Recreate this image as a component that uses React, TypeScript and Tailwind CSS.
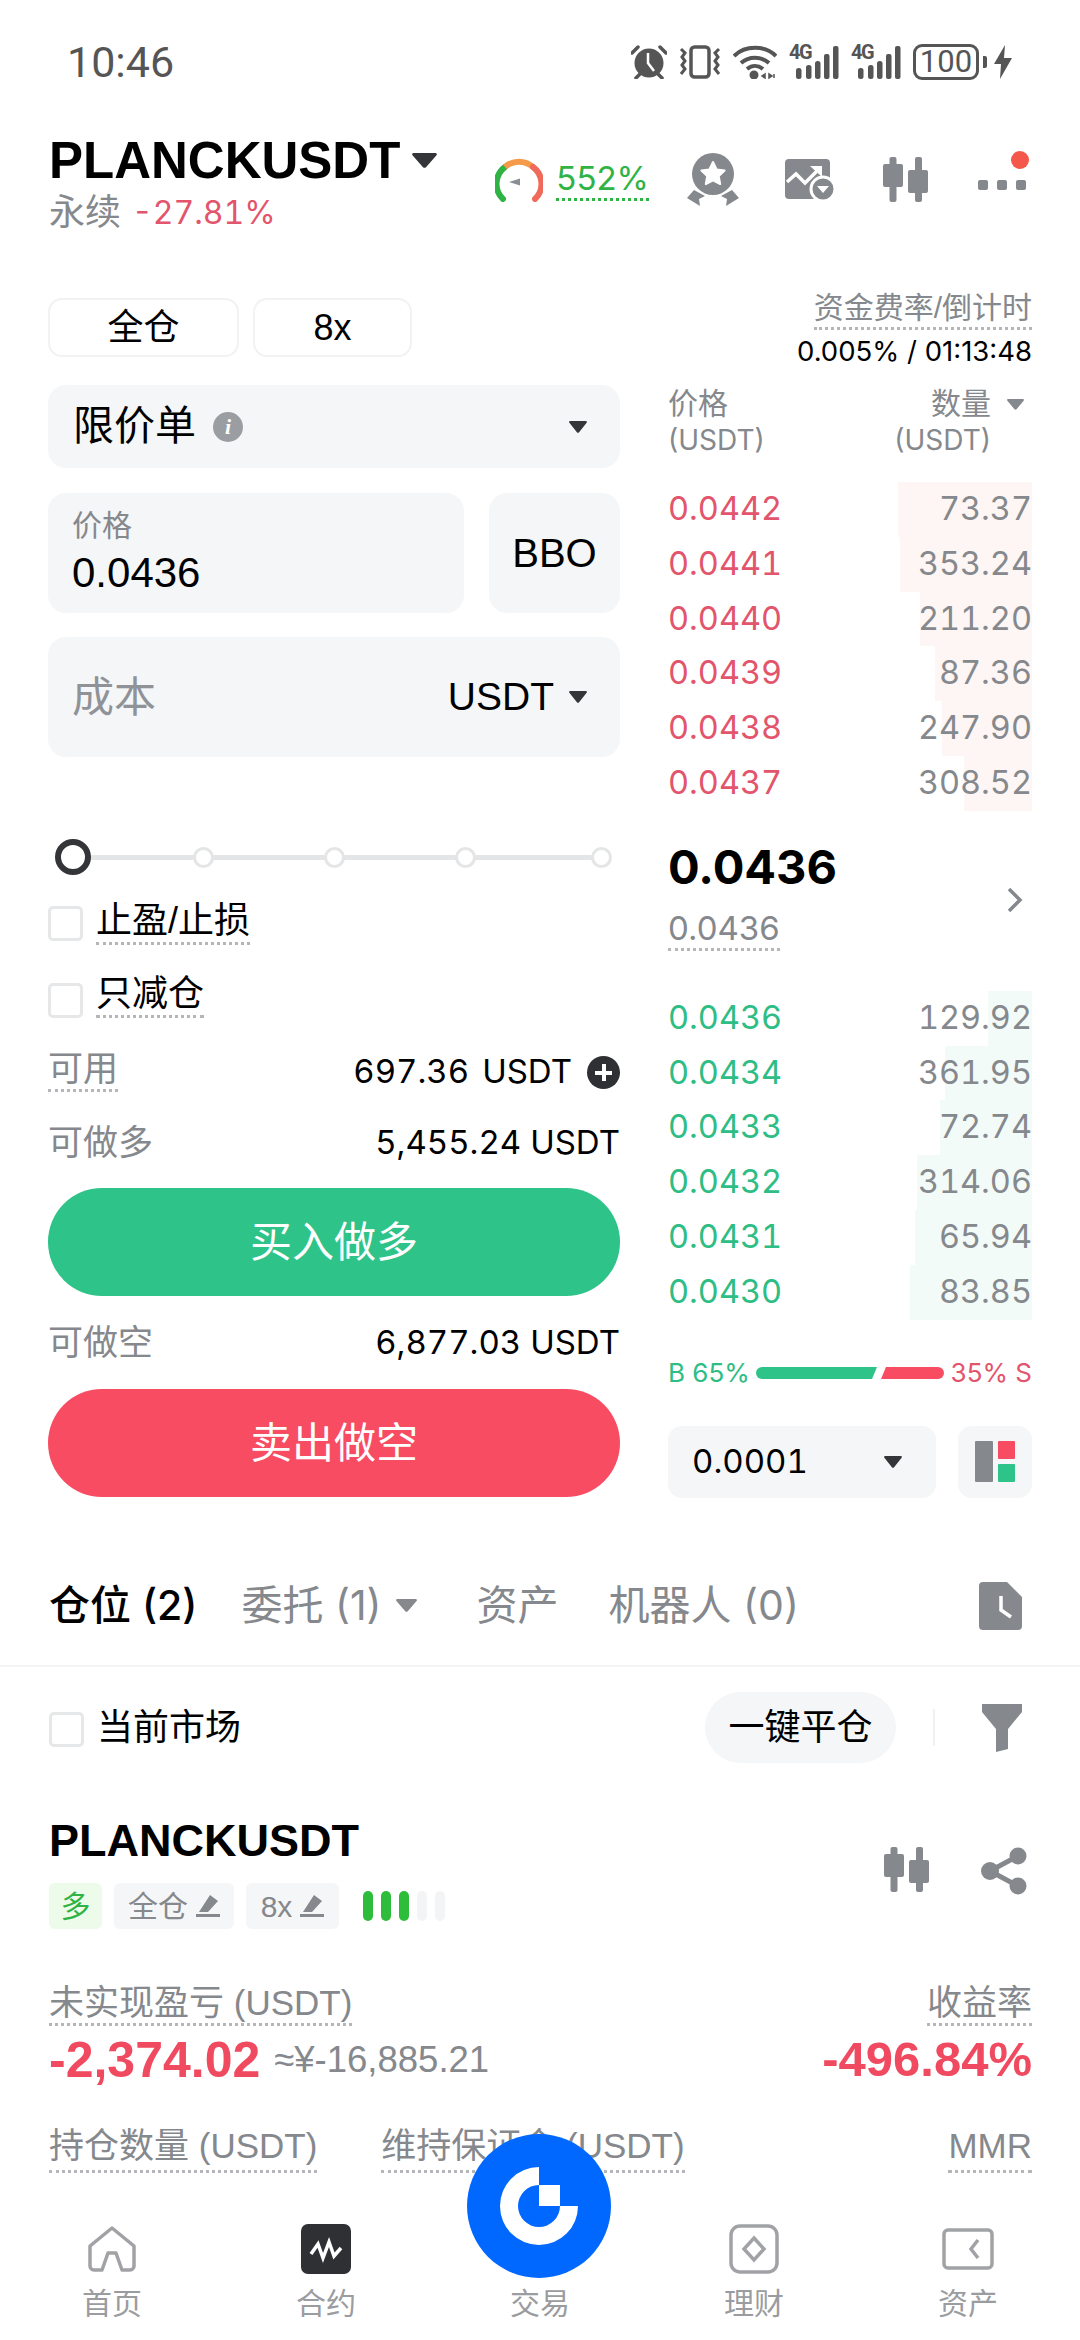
import type { ReactNode } from 'react';

const GRAY = '#85888c';

const asks = [
  { price: '0.0442', size: '73.37', bar: 134 },
  { price: '0.0441', size: '353.24', bar: 132 },
  { price: '0.0440', size: '211.20', bar: 112 },
  { price: '0.0439', size: '87.36', bar: 97 },
  { price: '0.0438', size: '247.90', bar: 90 },
  { price: '0.0437', size: '308.52', bar: 68 },
];

const bids = [
  { price: '0.0436', size: '129.92', bar: 44 },
  { price: '0.0434', size: '361.95', bar: 87 },
  { price: '0.0433', size: '72.74', bar: 92 },
  { price: '0.0432', size: '314.06', bar: 115 },
  { price: '0.0431', size: '65.94', bar: 117 },
  { price: '0.0430', size: '83.85', bar: 122 },
];

function Caret({ w, h, color = '#333538' }: { w: number; h: number; color?: string }) {
  return (
    <svg width={w} height={h} viewBox="0 0 20 14" preserveAspectRatio="none" className="shrink-0">
      <path d="M1.5 0h17c1.2 0 1.8 1.2 1.1 2.1L11.2 13.2c-.6.8-1.8.8-2.4 0L.4 2.1C-.3 1.2.3 0 1.5 0z" fill={color} />
    </svg>
  );
}

function Dotted({ children, className = '' }: { children: ReactNode; className?: string }) {
  return <span className={`inline-block border-b-[3px] border-dotted border-[#b4b6b9] ${className}`}>{children}</span>;
}

function Gauge() {
  return (
    <svg width="48" height="44" viewBox="0 0 48 44" className="shrink-0">
      <path d="M8 41A21 21 0 0 1 10 9" fill="none" stroke="#2fb344" strokeWidth="6" strokeLinecap="round" />
      <path d="M10 9A21 21 0 0 1 38 9" fill="none" stroke="#f59a4a" strokeWidth="6" />
      <path d="M38 9A21 21 0 0 1 40 41" fill="none" stroke="#ef6a5a" strokeWidth="6" strokeLinecap="round" />
      <path d="M14 24l11-3.5v7z" fill="#8a8d91" />
    </svg>
  );
}

function AwardIcon() {
  return (
    <svg width="52" height="54" viewBox="0 0 52 54" className="shrink-0">
      <circle cx="26" cy="21" r="21" fill="#85888c" />
      <path d="M26 9l3.6 7.4 8 1.1-5.8 5.6 1.4 8-7.2-3.8-7.2 3.8 1.4-8-5.8-5.6 8-1.1z" fill="#fff" stroke="#fff" strokeWidth="2" strokeLinejoin="round" />
      <path d="M7 37l11 6-6 3 1 7-13-8z" fill="#85888c" />
      <path d="M45 37l-11 6 6 3-1 7 13-8z" fill="#85888c" />
    </svg>
  );
}

function ChartIcon() {
  return (
    <svg width="50" height="44" viewBox="0 0 50 44" className="shrink-0">
      <rect x="0" y="1" width="45" height="40" rx="4" fill="#85888c" />
      <path d="M2 24l9-8 9 9 14-14" fill="none" stroke="#fff" strokeWidth="3.5" />
      <path d="M25 8h12v11z" fill="#fff" />
      <circle cx="38" cy="31" r="12" fill="#85888c" stroke="#fff" strokeWidth="3" />
      <path d="M32 28h12l-6 7z" fill="#fff" />
    </svg>
  );
}

function CandleIcon() {
  return (
    <svg width="46" height="46" viewBox="0 0 46 46" className="shrink-0">
      <rect x="6.5" y="0" width="7" height="45" rx="2" fill="#85888c" />
      <rect x="0" y="7" width="20" height="23" rx="2" fill="#85888c" />
      <rect x="32" y="0" width="7" height="45" rx="2" fill="#85888c" />
      <rect x="25" y="13" width="20" height="23" rx="2" fill="#85888c" />
    </svg>
  );
}

function AlarmIcon() {
  return (
    <svg width="36" height="34" viewBox="0 0 36 34" className="shrink-0">
      <circle cx="18" cy="18" r="14.5" fill="#555" />
      <path d="M17 8v10l6 8" fill="none" stroke="#fff" strokeWidth="2.5" />
      <path d="M1 8l6-6M35 8l-6-6M5 33l4-4M31 33l-4-4" stroke="#555" strokeWidth="3.5" strokeLinecap="round" />
    </svg>
  );
}

function VibrateIcon() {
  return (
    <svg width="42" height="34" viewBox="0 0 42 34" className="shrink-0">
      <rect x="12" y="2" width="18" height="30" rx="3.5" fill="none" stroke="#555" strokeWidth="3.5" />
      <path d="M2 4l4 4-3 4 3 4-3 4 3 4-4 5M40 4l-4 4 3 4-3 4 3 4-3 4 4 5" fill="none" stroke="#555" strokeWidth="3" />
    </svg>
  );
}

function WifiIcon() {
  return (
    <svg width="44" height="34" viewBox="0 0 44 34" className="shrink-0">
      <path d="M1 11C12 0 32 0 43 11M8 18c8-7 20-7 28 0M14 24c5-4 11-4 16 0" fill="none" stroke="#555" strokeWidth="4" />
      <circle cx="21" cy="30" r="4.5" fill="#555" />
      <path d="M32 29l-3 2 3 2zM36 33l3-2-3-2zM41 29v4" stroke="#555" strokeWidth="1.5" fill="#555" />
    </svg>
  );
}

function Signal() {
  return (
    <div className="relative w-[50px] h-[35px] shrink-0">
      <span className="absolute left-0 top-[-3px] text-[20px] leading-[20px] font-bold text-[#555] tracking-[-1.5px] font-['Roboto',sans-serif]">4G</span>
      <svg width="50" height="35" viewBox="0 0 50 35" className="absolute left-0 top-0">
        <rect x="7" y="23" width="5.5" height="11" rx="2.5" fill="#555" />
        <rect x="17" y="20" width="5.5" height="14" rx="2.5" fill="#555" />
        <rect x="26" y="16" width="5.5" height="18" rx="2.5" fill="#555" />
        <rect x="35" y="9" width="5.5" height="25" rx="2" fill="#555" />
        <rect x="44" y="1" width="5.5" height="33" rx="2" fill="#555" />
      </svg>
    </div>
  );
}

function BoltIcon() {
  return (
    <svg width="18" height="34" viewBox="0 0 18 34" className="shrink-0">
      <path d="M11 0L0 19h7l-1 15L18 13h-8z" fill="#555" />
    </svg>
  );
}

function Checkbox({ className = '' }: { className?: string }) {
  return <span className={`block w-[35px] h-[35px] rounded-[5px] border-[3px] border-[#e6e7e8] shrink-0 ${className}`} />;
}

function DocIcon() {
  return (
    <svg width="44" height="48" viewBox="0 0 44 48" className="shrink-0">
      <path d="M4 0h24l15 15v29a4 4 0 0 1-4 4H4a4 4 0 0 1-4-4V4a4 4 0 0 1 4-4z" fill="#85888c" />
      <path d="M22 14v14l10 7" fill="none" stroke="#fff" strokeWidth="3.5" />
    </svg>
  );
}

function FilterIcon() {
  return (
    <svg width="40" height="48" viewBox="0 0 40 48" className="shrink-0">
      <path d="M0 0h40v8L26 25v20l-12 3V25L0 8z" fill="#85888c" />
    </svg>
  );
}

function ShareIcon() {
  return (
    <svg width="46" height="48" viewBox="0 0 46 48" className="shrink-0">
      <path d="M37 9L9 24l28 15" fill="none" stroke="#85888c" strokeWidth="5" />
      <circle cx="37" cy="9" r="8.5" fill="#85888c" />
      <circle cx="9" cy="24" r="9" fill="#85888c" />
      <circle cx="37" cy="39" r="8.5" fill="#85888c" />
    </svg>
  );
}

function Pencil() {
  return (
    <svg width="24" height="22" viewBox="0 0 24 22" className="shrink-0">
      <path d="M14 0l8 6-10 11H3zM0 19h24v3H0z" fill="#85888c" />
    </svg>
  );
}

function HomeIcon() {
  return (
    <svg width="48" height="46" viewBox="0 0 48 46" className="shrink-0">
      <path d="M24 2L2 20v20a4 4 0 0 0 4 4h8l6-17h8l6 17h8a4 4 0 0 0 4-4V20z" fill="none" stroke="#a0a2a5" strokeWidth="3.5" strokeLinejoin="round" />
    </svg>
  );
}

function ContractIcon() {
  return (
    <svg width="50" height="50" viewBox="0 0 50 50" className="shrink-0">
      <rect width="50" height="50" rx="7" fill="#2f3033" />
      <path d="M10 30l7-10 5 14 6-16 5 14 7-8" fill="none" stroke="#fff" strokeWidth="3.5" />
    </svg>
  );
}

function FinanceIcon() {
  return (
    <svg width="50" height="50" viewBox="0 0 50 50" className="shrink-0">
      <rect x="2" y="2" width="46" height="46" rx="9" fill="none" stroke="#a0a2a5" strokeWidth="3.5" />
      <path d="M25 14l10 11-10 11-10-11z" fill="none" stroke="#a0a2a5" strokeWidth="3.5" />
    </svg>
  );
}

function WalletIcon() {
  return (
    <svg width="52" height="42" viewBox="0 0 52 42" className="shrink-0">
      <rect x="2" y="2" width="48" height="38" rx="4" fill="none" stroke="#a0a2a5" strokeWidth="3.5" />
      <path d="M36 12l-7 9 7 9" fill="none" stroke="#a0a2a5" strokeWidth="3.5" />
    </svg>
  );
}

function GateLogo() {
  return (
    <svg width="144" height="144" viewBox="-72 -72 144 144">
      <circle r="72" fill="#0068ff" />
      <path d="M0-39A39 39 0 1 0 39 0H21A21 21 0 1 1 0-21z" fill="#fff" />
      <rect x="0" y="-21" width="21" height="21" fill="#fff" />
    </svg>
  );
}

function BookRow({ price, size, bar, priceClass, barClass }: {
  price: string;
  size: string;
  bar: number;
  priceClass: string;
  barClass: string;
}) {
  return (
    <div className="relative h-[54.8px] flex items-center justify-between font-['Inter','Noto_Sans_CJK_SC',sans-serif] text-[32.5px] tabular-nums">
      <div className={`absolute right-0 top-0 bottom-0 ${barClass}`} style={{ width: bar }} />
      <span className={`relative ${priceClass}`}>{price}</span>
      <span className="relative text-[#85888c]">{size}</span>
    </div>
  );
}

function NavItem({ icon, label }: { icon: ReactNode; label: string }) {
  return (
    <div className="flex flex-col items-center">
      <div className="h-[50px] flex items-center">{icon}</div>
      <span className="mt-[10px] text-[30px] leading-[40px] text-[#9a9c9f]">{label}</span>
    </div>
  );
}

export default function App() {
  return (
    <div className="relative w-[1080px] h-[2340px] overflow-hidden bg-white flex flex-col text-black font-['Liberation_Sans','Noto_Sans_CJK_SC',sans-serif]">
      {/* status bar */}
      <div className="h-[124px] shrink-0 flex items-center justify-between pl-[67px] pr-[68px]">
        <span className="text-[43px] text-[#555] font-['Roboto','Liberation_Sans',sans-serif]">10:46</span>
        <div className="flex items-center gap-[12px]">
          <AlarmIcon />
          <VibrateIcon />
          <WifiIcon />
          <Signal />
          <Signal />
          <div className="flex items-center gap-[4px]">
            <div className="w-[66px] h-[36px] rounded-[9px] border-[3px] border-[#555] flex items-center justify-center text-[31px] text-[#555] font-['Roboto',sans-serif]">100</div>
            <span className="block w-[4px] h-[12px] rounded-r-[2px] bg-[#555]" />
          </div>
          <span className="-ml-[5px]"><BoltIcon /></span>
        </div>
      </div>

      {/* symbol header */}
      <div className="h-[174px] shrink-0 flex items-start justify-between pl-[49px] pr-[54px]">
        <div className="pt-[13px]">
          <div className="flex items-start">
            <span className="text-[51px] leading-[48px] font-bold">PLANCKUSDT</span>
            <span className="ml-[12px] mt-[16px]"><Caret w={25} h={15} /></span>
          </div>
          <div className="mt-[5px] flex items-center leading-[46px]">
            <span className="text-[36px] text-[#85888c]">永续</span>
            <span className="ml-[11px] text-[32px] text-[#e2556c] font-['Inter',sans-serif] tabular-nums">-27.81%</span>
          </div>
        </div>
        <div className="flex items-center pt-[29px]">
          <Gauge />
          <Dotted className="ml-[13px] !border-[#2fb344] text-[33px] leading-[36px] pb-[2px] text-[#2fb344] font-['Inter',sans-serif]">552%</Dotted>
          <span className="ml-[38px]"><AwardIcon /></span>
          <span className="ml-[46px]"><ChartIcon /></span>
          <span className="ml-[48px]"><CandleIcon /></span>
          <div className="relative ml-[49px] w-[48px] h-[46px] flex items-center justify-between">
            <span className="absolute right-[-3px] top-[-6px] w-[18px] h-[18px] rounded-full bg-[#f4584b]" />
            <span className="w-[10px] h-[10px] mt-[10px] rounded-[2px] bg-[#85888c]" />
            <span className="w-[10px] h-[10px] mt-[10px] rounded-[2px] bg-[#85888c]" />
            <span className="w-[10px] h-[10px] mt-[10px] rounded-[2px] bg-[#85888c]" />
          </div>
        </div>
      </div>

      {/* trade form + order book */}
      <div className="shrink-0 flex pl-[48px] pr-[48px] h-[1201px]">
        <div className="w-[572px] shrink-0 flex flex-col">
          <div className="flex gap-[14px]">
            <div className="w-[191px] h-[59px] rounded-[14px] border-2 border-[#f1f2f3] flex items-center justify-center text-[36px]">全仓</div>
            <div className="w-[159px] h-[59px] rounded-[14px] border-2 border-[#f1f2f3] flex items-center justify-center text-[36px]">8x</div>
          </div>
          <div className="mt-[28px] h-[83px] rounded-[18px] bg-[#f5f6f7] flex items-center pl-[25px] pr-[33px]">
            <span className="text-[41px]">限价单</span>
            <span className="ml-[17px] w-[30px] h-[30px] rounded-full bg-[#9a9ea3] flex items-center justify-center text-white text-[22px] italic font-bold font-['Liberation_Serif',serif]">i</span>
            <span className="ml-auto"><Caret w={18} h={12} /></span>
          </div>
          <div className="mt-[25px] flex gap-[25px]">
            <div className="w-[416px] h-[120px] rounded-[18px] bg-[#f5f6f7] pl-[24px] pt-[15px]">
              <div className="text-[30px] leading-[36px] text-[#85888c]">价格</div>
              <div className="mt-[5px] text-[42px] leading-[48px]">0.0436</div>
            </div>
            <div className="w-[131px] h-[120px] rounded-[18px] bg-[#f5f6f7] flex items-center justify-center text-[40px]">BBO</div>
          </div>
          <div className="mt-[24px] h-[120px] rounded-[18px] bg-[#f5f6f7] flex items-center pl-[24px] pr-[33px]">
            <span className="text-[42px] text-[#8f9296]">成本</span>
            <span className="ml-auto text-[39px]">USDT</span>
            <span className="ml-[15px]"><Caret w={18} h={12} /></span>
          </div>

          {/* leverage slider */}
          <div className="relative mt-[82px] h-[36px] ml-[7px] flex items-center">
            <div className="absolute left-[20px] w-[530px] h-[5px] bg-[#e4e5e6]" />
            <span className="relative w-[36px] h-[36px] rounded-full border-[6px] border-[#333538] bg-white" />
            <span className="relative ml-[102px] w-[21px] h-[21px] rounded-full border-[3px] border-[#e4e5e6] bg-white" />
            <span className="relative ml-[110px] w-[21px] h-[21px] rounded-full border-[3px] border-[#e4e5e6] bg-white" />
            <span className="relative ml-[110px] w-[21px] h-[21px] rounded-full border-[3px] border-[#e4e5e6] bg-white" />
            <span className="relative ml-[115px] w-[21px] h-[21px] rounded-full border-[3px] border-[#e4e5e6] bg-white" />
          </div>

          <div className="mt-[26px] flex items-start gap-[13px]">
            <Checkbox className="mt-[5px]" />
            <Dotted className="text-[36px] leading-[40px] pb-[1px]">止盈/止损</Dotted>
          </div>
          <div className="mt-[29px] flex items-start gap-[13px]">
            <Checkbox className="mt-[9px]" />
            <Dotted className="text-[36px] leading-[40px] pb-[1px]">只减仓</Dotted>
          </div>
          <div className="mt-[31px] flex items-start justify-between">
            <Dotted className="text-[35px] leading-[40px] text-[#85888c]">可用</Dotted>
            <div className="flex items-center h-[46px] text-[33px] font-['Inter',sans-serif] tabular-nums">
              <span>697.36</span>
              <span className="ml-[13px]">USDT</span>
              <span className="relative ml-[15px] w-[33px] h-[33px] rounded-full bg-[#2f3033]">
                <span className="absolute left-[8px] top-[15px] w-[17px] h-[4px] bg-white" />
                <span className="absolute left-[15px] top-[8px] w-[4px] h-[17px] bg-white" />
              </span>
            </div>
          </div>
          <div className="mt-[28px] h-[40px] flex items-center justify-between">
            <span className="text-[35px] text-[#85888c]">可做多</span>
            <span className="text-[33px] font-['Inter',sans-serif] tabular-nums">5,455.24 USDT</span>
          </div>
          <div className="mt-[25px] h-[108px] rounded-full bg-[#2ec388] flex items-center justify-center text-white text-[42px]">买入做多</div>
          <div className="mt-[27px] h-[40px] flex items-center justify-between">
            <span className="text-[35px] text-[#85888c]">可做空</span>
            <span className="text-[33px] font-['Inter',sans-serif] tabular-nums">6,877.03 USDT</span>
          </div>
          <div className="mt-[26px] h-[108px] rounded-full bg-[#f84c62] flex items-center justify-center text-white text-[42px]">卖出做空</div>
        </div>

        <div className="ml-[48px] w-[364px] shrink-0 -mt-[8px] flex flex-col">
          <div className="flex flex-col items-end">
            <Dotted className="text-[30px] leading-[36px] pb-[1px] text-[#85888c]">资金费率/倒计时</Dotted>
            <div className="mt-[4px] text-[27.5px] leading-[34px] font-['Inter',sans-serif]">0.005% / 01:13:48</div>
          </div>
          <div className="mt-[18px] flex justify-between text-[#85888c]">
            <div>
              <div className="text-[30px] leading-[36px]">价格</div>
              <div className="text-[28px] leading-[36px] font-['Inter',sans-serif]">(USDT)</div>
            </div>
            <div className="flex items-start">
              <div className="flex flex-col items-end">
                <div className="text-[30px] leading-[36px]">数量</div>
                <div className="text-[28px] leading-[36px] font-['Inter',sans-serif]">(USDT)</div>
              </div>
              <span className="ml-[16px] mt-[13px] mr-[8px]"><Caret w={17} h={11} color={GRAY} /></span>
            </div>
          </div>
          <div className="mt-[24px]">
            {asks.map((row) => (
              <BookRow key={row.price} {...row} priceClass="text-[#e2556c]" barClass="bg-[#fdf6f4]" />
            ))}
          </div>
          <div className="mt-[28px] h-[152px] flex items-start justify-between">
            <div className="font-['Inter',sans-serif]">
              <div className="text-[47px] leading-[56px] font-bold">0.0436</div>
              <Dotted className="mt-[13px] text-[33px] leading-[40px] text-[#85888c]">0.0436</Dotted>
            </div>
            <svg width="16" height="26" viewBox="0 0 16 26" className="mt-[48px] mr-[9px]">
              <path d="M2 2l11 11L2 24" fill="none" stroke="#85888c" strokeWidth="3.5" />
            </svg>
          </div>
          <div>
            {bids.map((row) => (
              <BookRow key={row.price + row.size} {...row} priceClass="text-[#2dbd85]" barClass="bg-[#f3fbf8]" />
            ))}
          </div>
          <div className="mt-[38px] h-[30px] flex items-center text-[26px] font-['Inter',sans-serif]">
            <span className="text-[#2dbd85]">B 65%</span>
            <div className="ml-auto flex items-center">
              <svg width="188" height="12" viewBox="0 0 188 12">
                <path d="M6 0H121l-5 12H6a6 6 0 0 1 0-12z" fill="#2ec388" />
                <path d="M130 0H182a6 6 0 0 1 0 12H125z" fill="#f84c62" />
              </svg>
            </div>
            <span className="ml-[7px] text-[#e2556c]">35% S</span>
          </div>
          <div className="mt-[38px] flex gap-[22px]">
            <div className="w-[268px] h-[72px] rounded-[14px] bg-[#f5f6f7] flex items-center pl-[24px] pr-[34px] text-[33px] font-['Inter',sans-serif] tabular-nums">
              <span>0.0001</span>
              <span className="ml-auto"><Caret w={18} h={12} /></span>
            </div>
            <div className="w-[74px] h-[72px] rounded-[14px] bg-[#f5f6f7] flex items-center justify-center">
              <svg width="40" height="41" viewBox="0 0 40 41">
                <rect x="0" y="0" width="18" height="41" rx="1" fill="#85888c" />
                <rect x="23" y="0" width="17" height="18" rx="1" fill="#f84c62" />
                <rect x="23" y="23" width="17" height="18" rx="1" fill="#2ec388" />
              </svg>
            </div>
          </div>
        </div>
      </div>

      {/* position tabs */}
      <div className="h-[121px] shrink-0 mt-[47px] flex items-center pl-[49px] pr-[57px] text-[41px] text-[#85888c] font-['Inter','Noto_Sans_CJK_SC',sans-serif] border-b-2 border-[#f3f4f5]">
        <span className="text-black font-medium">仓位 (2)</span>
        <span className="ml-[44px]">委托 (1)</span>
        <span className="ml-[14px]"><Caret w={21} h={13} color={GRAY} /></span>
        <span className="ml-[60px]">资产</span>
        <span className="ml-[50px]">机器人 (0)</span>
        <span className="ml-auto"><DocIcon /></span>
      </div>

      <div className="shrink-0 mt-[25px] h-[71px] flex items-center pl-[49px] pr-[58px]">
        <Checkbox className="mt-[4px]" />
        <span className="ml-[13px] text-[36px]">当前市场</span>
        <span className="ml-auto w-[191px] h-[71px] rounded-full bg-[#f5f6f7] flex items-center justify-center text-[36px]">一键平仓</span>
        <span className="ml-[37px] w-[2px] h-[37px] bg-[#f0f1f2]" />
        <span className="ml-[47px]"><FilterIcon /></span>
      </div>

      {/* position card */}
      <div className="shrink-0 mt-[54px] pl-[49px] pr-[48px]">
        <div className="flex justify-between">
          <div>
            <div className="text-[45px] leading-[48px] font-bold">PLANCKUSDT</div>
            <div className="mt-[18px] flex items-center h-[46px]">
              <span className="w-[53px] h-[46px] rounded-[6px] bg-[#edfbea] flex items-center justify-center text-[30px] text-[#2fb344]">多</span>
              <span className="ml-[12px] w-[120px] h-[46px] rounded-[6px] bg-[#f5f6f7] flex items-center justify-center gap-[8px] text-[30px] text-[#85888c]">全仓<Pencil /></span>
              <span className="ml-[12px] w-[93px] h-[46px] rounded-[6px] bg-[#f5f6f7] flex items-center justify-center gap-[8px] text-[30px] text-[#85888c]">8x<Pencil /></span>
              <div className="ml-[24px] flex gap-[8px]">
                <span className="w-[10px] h-[30px] rounded-full bg-[#2dbd3a]" />
                <span className="w-[10px] h-[30px] rounded-full bg-[#2dbd3a]" />
                <span className="w-[10px] h-[30px] rounded-full bg-[#2dbd3a]" />
                <span className="w-[10px] h-[30px] rounded-full bg-[#f3f4f5]" />
                <span className="w-[10px] h-[30px] rounded-full bg-[#f3f4f5]" />
              </div>
            </div>
          </div>
          <div className="flex items-start gap-[51px] mt-[30px] pr-[5px]">
            <CandleIcon />
            <ShareIcon />
          </div>
        </div>
        <div className="mt-[54px] flex justify-between items-start">
          <Dotted className="text-[35px] leading-[40px] text-[#85888c]">未实现盈亏 (USDT)</Dotted>
          <Dotted className="text-[35px] leading-[40px] text-[#85888c]">收益率</Dotted>
        </div>
        <div className="mt-[5px] h-[58px] flex items-center">
          <span className="text-[50px] font-bold text-[#f04a60]">-2,374.02</span>
          <span className="ml-[14px] text-[36.5px] text-[#85888c]">≈¥-16,885.21</span>
          <span className="ml-auto text-[49px] font-bold text-[#f04a60]">-496.84%</span>
        </div>
        <div className="mt-[37px] flex items-start">
          <Dotted className="text-[35px] leading-[40px] pb-[4px] text-[#85888c]">持仓数量 (USDT)</Dotted>
          <Dotted className="ml-[64px] text-[35px] leading-[40px] pb-[4px] text-[#85888c]">维持保证金 (USDT)</Dotted>
          <Dotted className="ml-auto text-[35px] leading-[40px] pb-[4px] text-[#85888c]">MMR</Dotted>
        </div>
      </div>

      {/* bottom nav */}
      <div className="absolute left-0 right-0 bottom-0 h-[116px] bg-white grid grid-cols-5 px-[5px]">
        <NavItem icon={<HomeIcon />} label="首页" />
        <NavItem icon={<ContractIcon />} label="合约" />
        <div className="flex flex-col items-center justify-end pb-[16px]">
          <span className="text-[30px] leading-[40px] text-[#9a9c9f]">交易</span>
        </div>
        <NavItem icon={<FinanceIcon />} label="理财" />
        <NavItem icon={<WalletIcon />} label="资产" />
      </div>
      <div className="absolute left-[467px] top-[2134px]"><GateLogo /></div>
    </div>
  );
}
